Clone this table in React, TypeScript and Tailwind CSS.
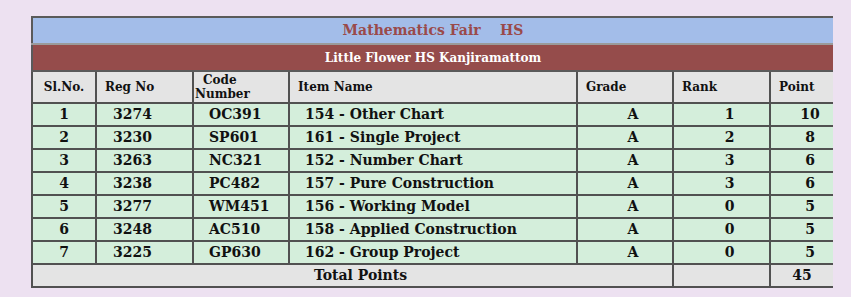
import React from 'react'

const rows = [
  { sl: 1, reg: '3274', code: 'OC391', item: '154 - Other Chart', grade: 'A', rank: 1, point: 10 },
  { sl: 2, reg: '3230', code: 'SP601', item: '161 - Single Project', grade: 'A', rank: 2, point: 8 },
  { sl: 3, reg: '3263', code: 'NC321', item: '152 - Number Chart', grade: 'A', rank: 3, point: 6 },
  { sl: 4, reg: '3238', code: 'PC482', item: '157 - Pure Construction', grade: 'A', rank: 3, point: 6 },
  { sl: 5, reg: '3277', code: 'WM451', item: '156 - Working Model', grade: 'A', rank: 0, point: 5 },
  { sl: 6, reg: '3248', code: 'AC510', item: '158 - Applied Construction', grade: 'A', rank: 0, point: 5 },
  { sl: 7, reg: '3225', code: 'GP630', item: '162 - Group Project', grade: 'A', rank: 0, point: 5 },
]

const cell = 'border-2 border-[#515151] p-0 align-middle'
// last column has no dark right edge in the screenshot
const last = 'border-2 border-[#515151] border-r-0 p-0 align-middle'

export default function App() {
  const total = rows.reduce((s, r) => s + r.point, 0)

  return (
    <div
      className="min-h-[297px] w-full bg-[#ede1f1] pl-[31px] pt-[16px] text-[#111] font-bold"
      style={{ fontFamily: '"DejaVu Serif", serif' }}
    >
      <table className="w-[801px] table-fixed border-collapse">
        <colgroup>
          <col className="w-[64px]" />
          <col className="w-[97px]" />
          <col className="w-[96px]" />
          <col className="w-[288px]" />
          <col className="w-[96px]" />
          <col className="w-[97px]" />
          <col className="w-[63px]" />
        </colgroup>
        <tbody>
          {/* Fair title */}
          <tr className="h-[27px] bg-[#a3bde9]">
            <td colSpan={7} className="border-2 border-r-0 border-[#5a5a5a] border-b-[#9a9a9a] text-center text-[14px] text-[#9a4a4a]">
              Mathematics Fair&nbsp;&nbsp;&nbsp;&nbsp;HS
            </td>
          </tr>
          {/* School */}
          <tr className="h-[27px] bg-[#954c4b]">
            <td colSpan={7} className="border-2 border-r-0 border-[#5a5a5a] border-t-[#9a9a9a] text-center text-[12px] text-white">
              Little Flower HS Kanjiramattom
            </td>
          </tr>
          {/* Column headers */}
          <tr className="h-[32px] bg-[#e4e4e4] text-[12px] leading-[14px]">
            <td className={`${cell} text-center`}>Sl.No.</td>
            <td className={`${cell} pl-[8px]`}>Reg No</td>
            <td className={`${cell} pl-[1px]`}>
              <span className="block pl-[8px]">Code</span>
              <span className="block">Number</span>
            </td>
            <td className={`${cell} pl-[8px]`}>Item Name</td>
            <td className={`${cell} pl-[8px]`}>Grade</td>
            <td className={`${cell} pl-[8px]`}>Rank</td>
            <td className={`${last} pl-[8px]`}>Point</td>
          </tr>
          {rows.map((r) => (
            <tr key={r.sl} className="h-[23px] bg-[#d4eedb] text-[14px] leading-[17px]">
              <td className={`${cell} text-center`}>{r.sl}</td>
              <td className={`${cell} pl-[16px]`}>{r.reg}</td>
              <td className={`${cell} pl-[15px]`}>{r.code}</td>
              <td className={`${cell} pl-[15px]`}>{r.item}</td>
              <td className={`${cell} pl-4 text-center`}>{r.grade}</td>
              <td className={`${cell} pl-4 text-center`}>{r.rank}</td>
              <td className={`${last} pl-4 text-center`}>{r.point}</td>
            </tr>
          ))}
          <tr className="h-[23px] bg-[#e4e4e4] text-[14px] leading-[17px]">
            <td colSpan={5} className={`${cell} pl-4 text-center`}>Total Points</td>
            <td className={cell}></td>
            <td className={`${last} text-center`}>{total}</td>
          </tr>
        </tbody>
      </table>
    </div>
  )
}
